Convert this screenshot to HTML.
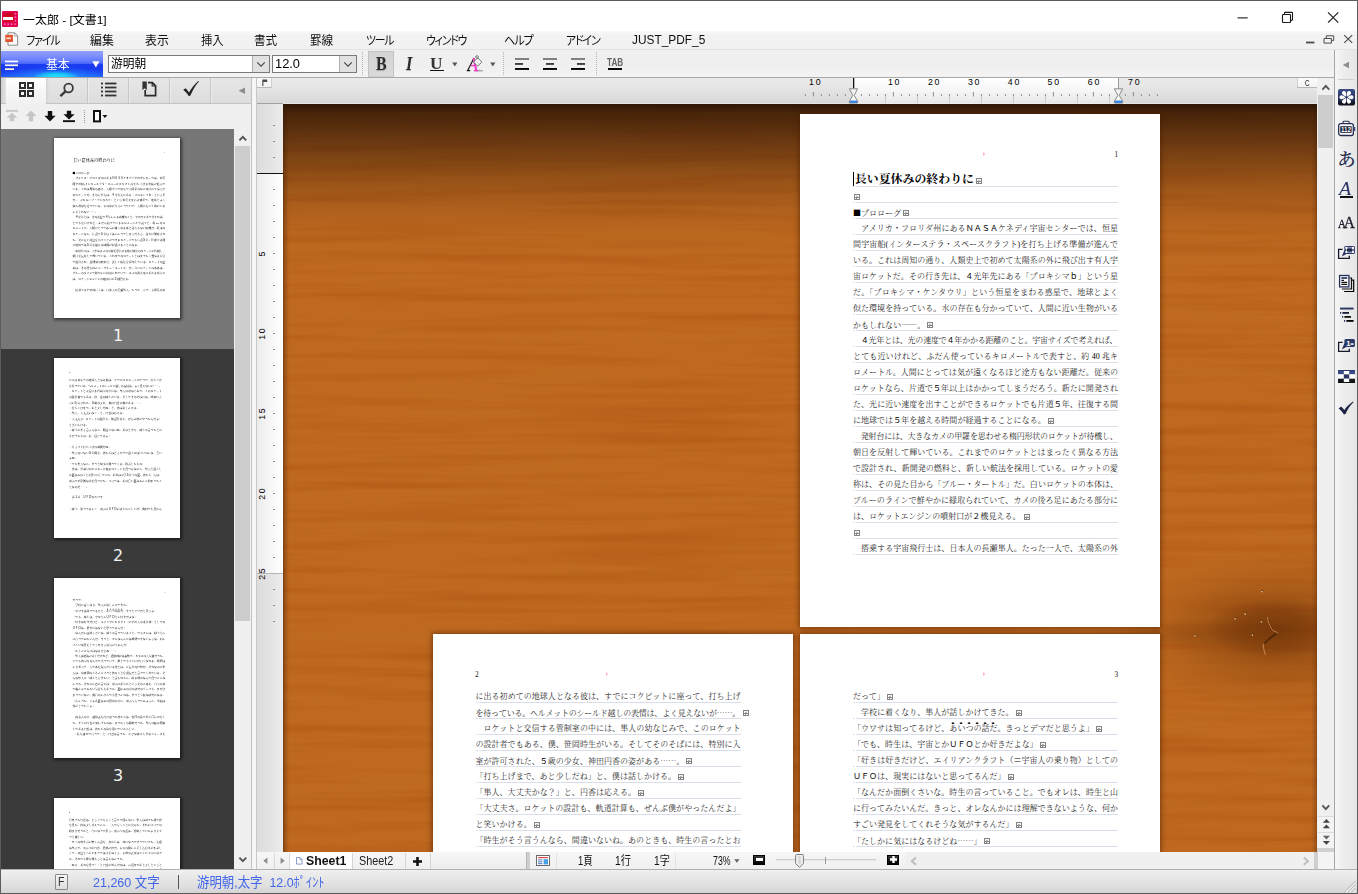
<!DOCTYPE html>
<html lang="ja">
<head>
<meta charset="utf-8">
<title>一太郎 - [文書1]</title>
<style>

*{box-sizing:border-box;margin:0;padding:0}
html,body{width:1358px;height:894px;overflow:hidden;background:#fff}
body{font-family:"Liberation Sans","Noto Sans CJK JP",sans-serif;font-size:12px;color:#000}
#app{position:absolute;left:0;top:0;width:1358px;height:894px;overflow:hidden;background:#fff}
.a{position:absolute}
.t{position:absolute;white-space:pre;line-height:20px;height:20px;transform-origin:0 50%;font-feature-settings:"palt"}
svg{position:absolute;overflow:visible}

.ln{position:absolute;left:0;width:265px;height:16px;line-height:16px;font-size:8px;font-weight:300;white-space:nowrap;letter-spacing:.03px;font-family:"Liberation Serif","Noto Serif CJK SC",serif;color:#000}
.ln.j{text-align:justify;text-align-last:justify;text-justify:inter-character;letter-spacing:0}
.ln.tt{margin-top:-1.6px;padding-left:1.8px;font-size:11.9px;font-weight:700;letter-spacing:.03px;font-family:"Liberation Serif","Noto Serif CJK SC",serif}
.g{font-family:"Liberation Sans","Noto Sans CJK JP",sans-serif;font-weight:400}
.c{font-family:"Noto Serif CJK SC","Liberation Serif",serif}
.em{position:relative}
.em:before{content:"";position:absolute;left:0;right:0;top:-2.2px;height:2.6px;background:radial-gradient(ellipse 1.25px 1.3px at 50% 50%,#000 0,#000 72%,rgba(0,0,0,0) 100%) 0 0/8.03px 2.6px repeat-x}
.thp .ln{font-weight:500}
.pg{position:absolute;background:#fff}
.thp{position:absolute;width:360px;height:514px;transform:scale(.35);transform-origin:0 0;background:#fff}
.thb{position:absolute;width:126px;height:180px;background:#fff;overflow:hidden;box-shadow:1px 1px 3px 1px rgba(0,0,0,.55)}
.tl{position:absolute;left:0;width:234px;text-align:center;font-size:16px;line-height:20px;color:#f2f2f2;font-family:"DejaVu Sans","Liberation Sans",sans-serif}

.page{position:absolute;background:#fff;box-shadow:0 0 5px 1px rgba(70,28,0,.6)}
.ul{position:absolute;height:1px;width:265px;background:linear-gradient(90deg,#dde1ec 0,#dde1ec 1.6px,rgba(255,255,255,0) 1.6px,rgba(255,255,255,0) 3.2px,#dadeeb 3.2px,#dadeeb 100%)}
.rm{position:absolute;width:6px;height:6px;background:#858585}
.rm:before{content:"";position:absolute;left:1px;top:1px;width:4px;height:2px;background:linear-gradient(90deg,#fff 0,#fff 1.2px,#b9b9b9 1.2px,#b9b9b9 2.6px,#fff 2.6px,#fff 100%);border-top:1px solid #f4f4f4;box-sizing:content-box;height:1.2px}
.rm:after{content:"";position:absolute;left:1px;top:4px;width:4px;height:1px;background:linear-gradient(90deg,#fff 0,#fff 1px,#858585 1px,#858585 1.8px,#fff 1.8px,#fff 100%)}

</style>
</head>
<body>
<div id="app">
<div class="a" style="left:0;top:0;width:1358px;height:30px;background:#fff"></div>
<svg style="left:2px;top:10.5px" width="16" height="16" viewBox="0 0 16 16">
<rect x="0" y="0" width="16" height="16" rx="1" fill="#e2064c"/>
<rect x="1.5" y="2" width="10.5" height="8.5" fill="#cf0621"/>
<rect x="1" y="6" width="10" height="3" fill="#fff"/>
<g fill="#ff5fd0"><rect x="12.6" y="2" width="1.6" height="1.6"/><rect x="12.6" y="5.4" width="1.6" height="1.6"/><rect x="12.6" y="8.8" width="1.6" height="1.6"/>
<rect x="2" y="12.4" width="1.6" height="1.6"/><rect x="5.4" y="12.4" width="1.6" height="1.6"/><rect x="8.8" y="12.4" width="1.6" height="1.6"/><rect x="12.4" y="12.4" width="1.6" height="1.6" fill="#f06a9a"/></g>
</svg>
<span class="t " style="left:23.3px;top:9.6px;font-size:11.8px;font-weight:400;color:#000;font-family:'Liberation Sans','Noto Sans CJK JP',sans-serif;transform:scaleX(1.013);">一太郎 - [文書1]</span>
<svg style="left:1230px;top:8px" width="120" height="20" viewBox="1230 8 120 20" fill="none" stroke="#1a1a1a" stroke-width="1">
<path d="M1237.5 17.9h10.2" stroke-width="1.1"/>
<rect x="1282.5" y="14.5" width="8" height="8" rx="0.8" stroke-width="1.1"/>
<path d="M1284.5 14.2v-1a0.800 0.800 0 0 1 0.800 -0.800h6.400a0.800 0.800 0 0 1 0.800 0.800v6.400a0.800 0.800 0 0 1 -0.800 0.800h-1" stroke-width="1.1"/>
<path d="M1328 12.4l10.3 10.3M1338.3 12.4l-10.3 10.3" stroke-width="1.15"/>
</svg>
<div class="a" style="left:1px;top:30.5px;width:1356px;height:19.5px;background:linear-gradient(#f8f8f8,#f2f2f2 25%,#f1f1f1)"></div>
<div class="a" style="left:1px;top:49px;width:1356px;height:1px;background:#e3e3e3"></div>
<svg style="left:5px;top:32px" width="14" height="14" viewBox="0 0 14 14">
<path d="M3 0.8h6.6l3 3v9.4h-9.6z" fill="#fdfdfd" stroke="#8a8a8a" stroke-width="1"/>
<path d="M9.4 0.8v3.2h3.2" fill="none" stroke="#9a9a9a" stroke-width="0.9"/>
<rect x="0.3" y="2.8" width="7.6" height="7.2" fill="#e2512f"/>
<rect x="1.3" y="5.4" width="4.6" height="1.8" fill="#fbd9cf"/>
</svg>
<span class="t " style="left:25.5px;top:30.8px;font-size:12.3px;font-weight:400;color:#111;font-family:'Liberation Sans','Noto Sans CJK JP',sans-serif;transform:scaleX(0.897);letter-spacing:-1.3px;">ファイル</span>
<span class="t " style="left:90.4px;top:30.8px;font-size:12.3px;font-weight:400;color:#111;font-family:'Liberation Sans','Noto Sans CJK JP',sans-serif;transform:scaleX(0.967);">編集</span>
<span class="t " style="left:145.2px;top:30.8px;font-size:12.3px;font-weight:400;color:#111;font-family:'Liberation Sans','Noto Sans CJK JP',sans-serif;transform:scaleX(0.967);">表示</span>
<span class="t " style="left:201.4px;top:30.8px;font-size:12.3px;font-weight:400;color:#111;font-family:'Liberation Sans','Noto Sans CJK JP',sans-serif;transform:scaleX(0.918);">挿入</span>
<span class="t " style="left:253.8px;top:30.8px;font-size:12.3px;font-weight:400;color:#111;font-family:'Liberation Sans','Noto Sans CJK JP',sans-serif;transform:scaleX(0.943);">書式</span>
<span class="t " style="left:310.4px;top:30.8px;font-size:12.3px;font-weight:400;color:#111;font-family:'Liberation Sans','Noto Sans CJK JP',sans-serif;transform:scaleX(0.943);">罫線</span>
<span class="t " style="left:366px;top:30.8px;font-size:12.3px;font-weight:400;color:#111;font-family:'Liberation Sans','Noto Sans CJK JP',sans-serif;transform:scaleX(0.881);letter-spacing:-1.3px;">ツール</span>
<span class="t " style="left:426.4px;top:30.8px;font-size:12.3px;font-weight:400;color:#111;font-family:'Liberation Sans','Noto Sans CJK JP',sans-serif;transform:scaleX(0.877);letter-spacing:-1.3px;">ウィンドウ</span>
<span class="t " style="left:504.2px;top:30.8px;font-size:12.3px;font-weight:400;color:#111;font-family:'Liberation Sans','Noto Sans CJK JP',sans-serif;transform:scaleX(0.912);letter-spacing:-1.3px;">ヘルプ</span>
<span class="t " style="left:565.8px;top:30.8px;font-size:12.3px;font-weight:400;color:#111;font-family:'Liberation Sans','Noto Sans CJK JP',sans-serif;transform:scaleX(0.889);letter-spacing:-1.3px;">アドイン</span>
<span class="t " style="left:632.4px;top:30px;font-size:13.6px;font-weight:400;color:#111;font-family:'Liberation Sans','Noto Sans CJK JP',sans-serif;transform:scaleX(0.874);">JUST_PDF_5</span>
<svg style="left:1300px;top:32px" width="56" height="16" viewBox="1300 32 56 16" fill="none" stroke="#4a4a4a">
<path d="M1306 42.5h8.4" stroke-width="1.8"/>
<path d="M1324 38.5h7.4v4.6h-7.4z" stroke-width="1"/>
<path d="M1326.3 38.3v-2.5h7.4v4.6h-2.2" stroke-width="1"/>
<path d="M1344.2 35.2l8 7.6M1352.2 35.2l-8 7.6" stroke-width="1.1"/>
</svg>
<div class="a" style="left:1px;top:50px;width:1333px;height:27px;background:linear-gradient(#f0f0f0,#efefef 60%,#f4f4f4)"></div>
<div class="a" style="left:1px;top:77px;width:1333px;height:1px;background:#a8a8a8"></div>
<div class="a" style="left:1px;top:51px;width:102px;height:26px;background:
radial-gradient(ellipse 24px 7px at 54% 102%,#1ee4ff 0%,rgba(26,214,255,.95) 45%,rgba(30,170,255,0) 100%),
radial-gradient(ellipse 58px 12px at 54% 106%,rgba(30,190,255,.95) 0%,rgba(32,150,255,.6) 45%,rgba(31,120,255,0) 100%),
linear-gradient(#8d9dff 0%,#8797ff 12%,#7487ff 26%,#5f78fd 40%,#4764fa 49%,#1b3bf1 52%,#1a3af0 70%,#1f48f3 86%,#2358f6 100%)"></div>
<svg style="left:5px;top:58.5px" width="14" height="12" viewBox="0 0 14 12" fill="#fff">
<rect x="0" y="1.6" width="13" height="1.7"/><rect x="0" y="5.4" width="13" height="1.7" fill="#fffbe8"/><rect x="0" y="9.3" width="9" height="1.7" fill="#fff8dc"/></svg>
<span class="t " style="left:46.2px;top:54.6px;font-size:12.3px;font-weight:400;color:#fff;font-family:'Liberation Sans','Noto Sans CJK JP',sans-serif;transform:scaleX(0.959);">基本</span>
<svg style="left:91.5px;top:60.5px" width="8" height="7" viewBox="0 0 8 7"><path d="M0.3 0.3h7.2l-3.6 6.2z" fill="#fff"/></svg>
<div class="a" style="left:108px;top:55px;width:162px;height:18px;background:#fff;border:1px solid #7a7a7a"></div>
<div class="a" style="left:252px;top:56px;width:17px;height:16px;background:#e1e1e1;border-left:1px solid #adadad"></div>
<svg style="left:255.5px;top:61px" width="10" height="7" viewBox="0 0 10 7"><path d="M1.2 1.4l3.8 3.8 3.8-3.8" fill="none" stroke="#444" stroke-width="1.1"/></svg>
<span class="t " style="left:111.2px;top:54.3px;font-size:12.3px;font-weight:400;color:#000;font-family:'Liberation Sans','Noto Sans CJK JP',sans-serif;transform:scaleX(0.954);">游明朝</span>
<div class="a" style="left:272px;top:55px;width:85px;height:18px;background:#fff;border:1px solid #7a7a7a"></div>
<div class="a" style="left:339px;top:56px;width:17px;height:16px;background:#e1e1e1;border-left:1px solid #adadad"></div>
<svg style="left:342.5px;top:61px" width="10" height="7" viewBox="0 0 10 7"><path d="M1.2 1.4l3.8 3.8 3.8-3.8" fill="none" stroke="#444" stroke-width="1.1"/></svg>
<span class="t " style="left:275.2px;top:54.3px;font-size:13px;font-weight:400;color:#000;font-family:'Liberation Sans','Noto Sans CJK JP',sans-serif;transform:scaleX(0.988);">12.0</span>
<div class="a" style="left:362px;top:52px;width:1px;height:24px;background:repeating-linear-gradient(#b4b4b4 0 1px,transparent 1px 2px)"></div>
<div class="a" style="left:503px;top:52px;width:1px;height:24px;background:repeating-linear-gradient(#b4b4b4 0 1px,transparent 1px 2px)"></div>
<div class="a" style="left:596px;top:52px;width:1px;height:24px;background:repeating-linear-gradient(#b4b4b4 0 1px,transparent 1px 2px)"></div>
<div class="a" style="left:368px;top:51px;width:26px;height:26px;background:linear-gradient(#d4d4d4,#dadada);border:1px solid #c2c2c2;border-bottom-color:#cfcfcf"></div>
<span class="t" style="left:375.6px;top:54.1px;font-family:'Liberation Serif',serif;font-weight:700;font-size:19.5px;color:#2c2c2c;text-shadow:0 1px 1px rgba(0,0,0,.25);transform:scaleX(.82)">B</span>
<span class="t" style="left:405.6px;top:54.1px;font-family:'Liberation Serif',serif;font-weight:700;font-style:italic;font-size:19px;color:#2c2c2c;text-shadow:0 1px 1px rgba(0,0,0,.25);transform:scaleX(.85)">I</span>
<span class="t" style="left:430.2px;top:53.7px;font-family:'Liberation Serif',serif;font-weight:700;font-size:15.8px;color:#333;transform:scaleX(1.1)">U</span>
<div class="a" style="left:430px;top:69.6px;width:14px;height:1.6px;background:#111"></div>
<svg style="left:451.8px;top:62px" width="6" height="5" viewBox="0 0 6 5"><path d="M0.2 0.4h5.2l-2.6 4z" fill="#555"/></svg>
<svg style="left:489.6px;top:62px" width="6" height="5" viewBox="0 0 6 5"><path d="M0.2 0.4h5.2l-2.6 4z" fill="#555"/></svg>
<svg style="left:466px;top:55px" width="18" height="18" viewBox="0 0 18 18" fill="none">
<ellipse cx="13" cy="15.700" rx="4.200" ry="0.900" fill="rgba(0,0,0,.28)"/>
<path d="M1.700 15.400L8 3" stroke="#1a1a1a" stroke-width="1.200"/>
<path d="M0.800 15.600h3.400" stroke="#111" stroke-width="1.300"/>
<path d="M7.600 3.200c1 3.800 1.800 7.800 2.600 12" stroke="#f040cc" stroke-width="2.100"/>
<path d="M4.800 10.600h4.800" stroke="#f040cc" stroke-width="1.500"/>
<path d="M7.800 15.600h4.400" stroke="#f040cc" stroke-width="1.500"/>
<path d="M11.700 2.900l4.100 4.100-4.100 4.100-4.100-4.100z" fill="#fff" stroke="#5e5e5e" stroke-width="0.900"/>
<path d="M10.400 6.400l2.400 2.400" stroke="#aaa" stroke-width="0.800"/>
<circle cx="11" cy="2" r="1.300" fill="#fff" stroke="#555" stroke-width="0.800"/>
</svg>
<svg style="left:515px;top:57px" width="14" height="14" viewBox="0 0 14 14">
<rect x="0" y="1.1" width="14" height="1.8" fill="#747474"/><rect x="0" y="6.1" width="8" height="1.7" fill="#2a2a2a"/><rect x="0" y="11" width="14" height="1.9" fill="#000"/></svg>
<svg style="left:543px;top:57px" width="14" height="14" viewBox="0 0 14 14">
<rect x="0" y="1.1" width="14" height="1.8" fill="#747474"/><rect x="3" y="6.1" width="8" height="1.7" fill="#2a2a2a"/><rect x="0" y="11" width="14" height="1.9" fill="#000"/></svg>
<svg style="left:571px;top:57px" width="14" height="14" viewBox="0 0 14 14">
<rect x="0" y="1.1" width="14" height="1.8" fill="#747474"/><rect x="6" y="6.1" width="8" height="1.7" fill="#2a2a2a"/><rect x="0" y="11" width="14" height="1.9" fill="#000"/></svg>
<span class="t " style="left:607px;top:52.4px;font-size:11px;font-weight:700;color:#666;font-family:'Liberation Sans','Noto Sans CJK JP',sans-serif;transform:scaleX(0.743);letter-spacing:0">TAB</span>
<div class="a" style="left:608px;top:68.1px;width:14.2px;height:1.8px;background:#0a0a0a"></div>
<div class="a" style="left:1px;top:78px;width:250px;height:26px;background:linear-gradient(#e6e6e6,#dddddd)"></div>
<div class="a" style="left:1px;top:103px;width:250px;height:1px;background:#c4c4c4"></div>
<div class="a" style="left:1px;top:104px;width:250px;height:25px;background:#f0f0f0"></div>
<div class="a" style="left:1px;top:78px;width:5px;height:25px;background:linear-gradient(90deg,#cfcfcf,#e4e4e4)"></div>
<div class="a" style="left:6px;top:78px;width:40px;height:27px;background:linear-gradient(#ffffff,#f8f8f8 40%,#f0f0f0)"></div>
<div class="a" style="left:87px;top:78px;width:1px;height:25px;background:#c6c6c6"></div>
<div class="a" style="left:88px;top:78px;width:1px;height:25px;background:#ececec"></div>
<div class="a" style="left:128px;top:78px;width:1px;height:25px;background:#c6c6c6"></div>
<div class="a" style="left:129px;top:78px;width:1px;height:25px;background:#ececec"></div>
<div class="a" style="left:169px;top:78px;width:1px;height:25px;background:#c6c6c6"></div>
<div class="a" style="left:170px;top:78px;width:1px;height:25px;background:#ececec"></div>
<div class="a" style="left:210px;top:78px;width:1px;height:25px;background:#c6c6c6"></div>
<div class="a" style="left:211px;top:78px;width:1px;height:25px;background:#ececec"></div>
<div class="a" style="left:46px;top:78px;width:3px;height:25px;background:linear-gradient(90deg,#d2d2d2,rgba(220,220,220,0))"></div>
<svg style="left:19px;top:82px" width="15" height="15" viewBox="0 0 15 15" fill="none" stroke="#2e2e2e" stroke-width="2">
<rect x="1" y="1" width="5" height="5"/><rect x="9" y="1" width="5" height="5"/><rect x="1" y="9" width="5" height="5"/><rect x="9" y="9" width="5" height="5"/></svg>
<svg style="left:59px;top:82px" width="16" height="16" viewBox="0 0 16 16" fill="none" stroke="#3a3a3a">
<circle cx="9.6" cy="6" r="4.3" stroke-width="1.8"/><path d="M6.4 9.4l-5 4.8" stroke-width="2.4"/></svg>
<svg style="left:101px;top:82px" width="16" height="15" viewBox="0 0 16 15" fill="#333">
<rect x="0" y="0.6" width="2" height="1.8"/><rect x="4" y="0.6" width="11.4" height="1.8"/>
<rect x="0" y="4.6" width="2" height="1.8"/><rect x="4" y="4.6" width="11.4" height="1.8"/>
<rect x="0" y="8.6" width="2" height="1.8"/><rect x="4" y="8.6" width="11.4" height="1.8"/>
<rect x="0" y="12.6" width="2" height="1.8"/><rect x="4" y="12.6" width="11.4" height="1.8"/></svg>
<svg style="left:142px;top:81px" width="15" height="16" viewBox="0 0 15 16" fill="none" stroke="#2a2a2a">
<path d="M6 1.6h4.4l3.2 3.2v9.8h-10.4v-5.6" stroke-width="1.7"/>
<path d="M0.4 0.4h4.4v8.6l-2.2-1.8-2.2 1.8z" fill="#333" stroke="none"/>
<path d="M10.2 1.8v3.2h3.2" stroke-width="1.2"/></svg>
<svg style="left:182px;top:80px" width="18" height="18" viewBox="0 0 18 18">
<path d="M1.2 9.8l2.6-1.6 3.2 4.4c2.6-4.6 5.6-8.4 9.4-11.6l0.6 0.5c-3.6 4-6.4 8.6-8.6 14.1l-1.6 0.6c-1.6-2.6-3.2-4.6-5.6-6.4z" fill="#222"/></svg>
<svg style="left:238px;top:87px" width="8" height="8" viewBox="0 0 8 8"><path d="M7 0.6v6.4l-6.4-3.2z" fill="#8c8c8c"/></svg>
<svg style="left:5px;top:109px" width="110" height="15" viewBox="5 109 110 15">
<g fill="#c6c6c6"><rect x="6" y="110" width="12" height="1.8"/><path d="M12 112.8l5.4 5h-3.2v3.4h-4.4v-3.4h-3.2z"/>
<path d="M31 110.6l5.4 5.4h-3.2v5.2h-4.4v-5.2h-3.2z"/></g>
<g fill="#111"><path d="M50 121.4l-5.6-5.6h3.4v-4.8h4.4v4.8h3.4z"/>
<path d="M69 119.4l-5.6-5.2h3.4v-3.4h4.4v3.4h3.4z"/><rect x="63" y="120.2" width="12" height="1.9"/>
<path d="M102.4 115h5l-2.5 3z"/></g>
<rect x="94" y="111" width="6" height="10.4" fill="#fff" stroke="#111" stroke-width="2"/>
</svg>
<div class="a" style="left:84px;top:110px;width:1px;height:14px;background:repeating-linear-gradient(#9a9a9a 0 1px,transparent 1px 2px)"></div>
<div class="a" style="left:1px;top:129px;width:233px;height:740px;background:#3a3a3a;overflow:hidden">
<div class="a" style="left:0;top:0;width:233px;height:220px;background:#777"></div>
<div class="thb" style="left:53px;top:9px"><div class="thp">
<div class="a" style="left:53.3px;top:34.6px;width:265px;text-align:right;font:7.4px/12px 'Liberation Serif',serif;color:#222">1</div>
<div style="left:53px;top:59px" class="ln tt ">長い夏休みの終わりに</div>
<div style="left:53px;top:91px" class="ln "><span class="c">■</span>プロローグ</div>
<div style="left:53px;top:107px" class="ln j ">　アメリカ・フロリダ州にある<span class="g">ＮＡＳＡ</span>ケネディ宇宙センターでは、恒星</div>
<div style="left:53px;top:123px" class="ln j ">間宇宙船(インターステラ・スペースクラフト)を打ち上げる準備が進んで</div>
<div style="left:53px;top:139px" class="ln j ">いる。これは周知の通り、人類史上で初めて太陽系の外に飛び出す有人宇</div>
<div style="left:53px;top:155px" class="ln j ">宙ロケットだ。その行き先は、<span class="g">４</span>光年先にある「プロキシマ<span class="g">ｂ</span>」という星</div>
<div style="left:53px;top:171px" class="ln j ">だ。「プロキシマ・ケンタウリ」という恒星をまわる惑星で、地球とよく</div>
<div style="left:53px;top:187px" class="ln j ">似た環境を持っている。水の存在も分かっていて、人間に近い生物がいる</div>
<div style="left:53px;top:203px" class="ln ">かもしれない<span class="c">――</span>。</div>
<div class="ln " style="left:53px;top:219px;letter-spacing:-0.206px">　<span class="g">４</span>光年とは、光の速度で<span class="g">４</span>年かかる距離のこと。宇宙サイズで考えれば、</div>
<div style="left:53px;top:235px" class="ln j ">とても近いけれど、ふだん使っているキロメートルで表すと、約 40 兆キ</div>
<div style="left:53px;top:251px" class="ln j ">ロメートル。人間にとっては気が遠くなるほど途方もない距離だ。従来の</div>
<div style="left:53px;top:267px" class="ln j ">ロケットなら、片道で<span class="g">５</span>年以上はかかってしまうだろう。新たに開発され</div>
<div style="left:53px;top:283px" class="ln j ">た、光に近い速度を出すことができるロケットでも片道<span class="g">５</span>年、往復する間</div>
<div style="left:53px;top:299px" class="ln ">に地球では<span class="g">５</span>年を越える時間が経過することになる。</div>
<div class="ln " style="left:53px;top:315px;letter-spacing:-0.206px">　発射台には、大きなカメの甲羅を思わせる楕円形状のロケットが待機し、</div>
<div style="left:53px;top:331px" class="ln j ">朝日を反射して輝いている。これまでのロケットとはまったく異なる方法</div>
<div style="left:53px;top:347px" class="ln j ">で設計され、新開発の燃料と、新しい航法を採用している。ロケットの愛</div>
<div style="left:53px;top:363px" class="ln j ">称は、その見た目から「ブルー・タートル」だ。白いロケットの本体は、</div>
<div style="left:53px;top:379px" class="ln j ">ブルーのラインで鮮やかに縁取られていて、カメの後ろ足にあたる部分に</div>
<div style="left:53px;top:395px" class="ln ">は、ロケットエンジンの噴射口が<span class="g">２</span>機見える。</div>
<div style="left:53px;top:427px" class="ln j ">　搭乗する宇宙飛行士は、日本人の長瀬隼人。たった一人で、太陽系の外</div>
</div></div>
<div class="tl" style="top:196.6px">1</div>
<div class="thb" style="left:53px;top:229px"><div class="thp">
<div class="a" style="left:42.6px;top:34.6px;width:265px;text-align:left;font:7.4px/12px 'Liberation Serif',serif;color:#222">2</div>
<div style="left:43px;top:55px" class="ln j ">に出る初めての地球人となる彼は、すでにコクピットに座って、打ち上げ</div>
<div class="ln " style="left:43px;top:71px;letter-spacing:-0.206px">を待っている。ヘルメットのシールド越しの表情は、よく見えないが<span class="c">……</span>。</div>
<div style="left:43px;top:87px" class="ln j ">　ロケットと交信する管制室の中には、隼人の幼なじみで、このロケット</div>
<div style="left:43px;top:103px" class="ln j ">の設計者でもある、僕、笹岡時生がいる。そしてそのそばには、特別に入</div>
<div style="left:43px;top:119px" class="ln ">室が許可された、<span class="g">５</span>歳の少女、神田円香の姿がある<span class="c">……</span>。</div>
<div style="left:43px;top:135px" class="ln ">「打ち上げまで、あと少しだね」と、僕は話しかける。</div>
<div style="left:43px;top:151px" class="ln ">「隼人、大丈夫かな？」と、円香は応える。</div>
<div style="left:43px;top:167px" class="ln j ">「大丈夫さ。ロケットの設計も、軌道計算も、ぜんぶ僕がやったんだよ」</div>
<div style="left:43px;top:183px" class="ln ">と笑いかける。</div>
<div style="left:43px;top:199px" class="ln j ">「時生がそう言うんなら、間違いないね。あのときも、時生の言ったとお</div>
<div style="left:43px;top:215px" class="ln ">りだったもの。私、信じてるよ」</div>
<div style="left:43px;top:247px" class="ln ">「もうすぐ打ち上げの時間だね」</div>
<div style="left:43px;top:263px" class="ln j ">「隼人のいない<span class="g">５</span>年間を、僕たちはどうやって過ごせばいいのかな。長い</div>
<div style="left:43px;top:279px" class="ln ">よね」</div>
<div style="left:43px;top:295px" class="ln ">「でも隼人なら、きっと無事に帰ってくる。約束したもの」</div>
<div style="left:43px;top:311px" class="ln j ">　僕は、管制室のモニターに映るロケットを見つめながら、隼人と過ごし</div>
<div class="ln " style="left:43px;top:327px;letter-spacing:-0.206px">た夏休みのことを思い出していた。あれは小学<span class="g">５</span>年生の夏。僕たち三人は、</div>
<div style="left:43px;top:343px" class="ln j ">裏山で不思議な光を見つけた。すべては、あの長い夏休みから始まったこ</div>
<div style="left:43px;top:359px" class="ln ">となのだ<span class="c">……</span>。</div>
<div style="left:43px;top:391px" class="ln ">　第<span class="g">１</span>章　<span class="g">ＵＦＯ</span>のウワサ</div>
<div style="left:43px;top:423px" class="ln j ">「時生、知ってるか？　裏山に<span class="g">ＵＦＯ</span>が落ちたらしいぞ。隣町でも見たん</div>
</div></div>
<div class="tl" style="top:416.6px">2</div>
<div class="thb" style="left:53px;top:449px"><div class="thp">
<div class="a" style="left:53.3px;top:34.6px;width:265px;text-align:right;font:7.4px/12px 'Liberation Serif',serif;color:#222">3</div>
<div style="left:53px;top:55px" class="ln ">だって」</div>
<div style="left:53px;top:71px" class="ln ">　学校に着くなり、隼人が話しかけてきた。</div>
<div style="left:53px;top:87px" class="ln ">「ウワサは知ってるけど、<span class="em">あいつの話だ</span>。きっとデマだと思うよ」</div>
<div style="left:53px;top:103px" class="ln ">「でも、時生は、宇宙とか<span class="g">ＵＦＯ</span>とか好きだよな」</div>
<div style="left:53px;top:119px" class="ln j ">「好きは好きだけど、エイリアンクラフト（<span class="g">＝</span>宇宙人の乗り物）としての</div>
<div style="left:53px;top:135px" class="ln "><span class="g">ＵＦＯ</span>は、現実にはないと思ってるんだ」</div>
<div style="left:53px;top:151px" class="ln j ">「なんだか面倒くさいな。時生の言っていること。でもオレは、時生と山</div>
<div style="left:53px;top:167px" class="ln j ">に行ってみたいんだ。きっと、オレなんかには理解できないような、何か</div>
<div style="left:53px;top:183px" class="ln ">すごい発見をしてくれそうな気がするんだ」</div>
<div style="left:53px;top:199px" class="ln ">「たしかに気にはなるけどね<span class="c">……</span>」</div>
<div class="ln " style="left:53px;top:215px;letter-spacing:-0.206px">　隼人は勉強が苦手だけれど、運動神経は抜群で、クラスの人気者だった。</div>
<div style="left:53px;top:231px" class="ln j ">いつも教室の真ん中で笑っていて、誰とでもすぐに仲良くなれる。理屈ば</div>
<div style="left:53px;top:247px" class="ln j ">かり並べて一人で本を読んでいる僕とは、正反対の性格だ。それなのに隼</div>
<div style="left:53px;top:263px" class="ln j ">人は、幼稚園のころからずっと僕のことを親友だと言ってくれている。そ</div>
<div style="left:53px;top:279px" class="ln j ">んな隼人に「時生と行きたい」と言われたら、断る理由なんて見つからな</div>
<div style="left:53px;top:295px" class="ln j ">かった。それに正直に言えば、裏山に落ちたという光の正体を、自分の目</div>
<div style="left:53px;top:311px" class="ln j ">で確かめてみたい気持ちもあった。夏休みの自由研究のテーマも、まだ決</div>
<div style="left:53px;top:327px" class="ln j ">まっていない。隕石のかけらでも見つかれば、きっと立派な研究になる。</div>
<div style="left:53px;top:343px" class="ln j ">「わかった。じゃあ夏休みの最初の日に、裏山へ行ってみようか。準備は</div>
<div style="left:53px;top:359px" class="ln ">僕がしておくよ」</div>
<div style="left:53px;top:391px" class="ln j ">　終業式の日、通知表を受け取った僕たちは、校門の前で待ち合わせをし</div>
<div style="left:53px;top:407px" class="ln j ">た。そこに円香が加わったのは、まったくの偶然だった。隼人の妹の同級</div>
<div style="left:53px;top:423px" class="ln ">生である円香は、僕たちの話を聞いていたらしい。</div>
<div style="left:53px;top:439px" class="ln j ">　「私も連れて行って」と、円香は言った。小さな体に大きなリュックを</div>
</div></div>
<div class="tl" style="top:636.6px">3</div>
<div class="thb" style="left:53px;top:669px"><div class="thp">
<div class="a" style="left:42.6px;top:34.6px;width:265px;text-align:left;font:7.4px/12px 'Liberation Serif',serif;color:#222">4</div>
<div style="left:43px;top:55px" class="ln j ">背負った円香は、どうしても行くと言って聞かない。隼人は困った顔で僕</div>
<div style="left:43px;top:71px" class="ln j ">を見た。僕は少し考えてから、三人で行くことに決めた。それがすべての</div>
<div style="left:43px;top:87px" class="ln j ">始まりだったと、今になって思う。裏山への道は、想像していたよりもず</div>
<div style="left:43px;top:103px" class="ln ">っと険しい。</div>
<div style="left:43px;top:119px" class="ln j ">　セミの鳴き声が響く山道を、僕たちは一列になって登っていった。先頭</div>
<div style="left:43px;top:135px" class="ln j ">は隼人で、真ん中が円香、最後が僕だ。木々の間から差し込む光がまぶし</div>
<div style="left:43px;top:151px" class="ln j ">くて、何度も立ち止まっては汗をぬぐう。水筒の麦茶はすぐに半分になっ</div>
<div style="left:43px;top:167px" class="ln ">た。それでも誰も帰ろうとは言わなかった。</div>
<div style="left:43px;top:183px" class="ln j ">「ねえ、あれを見て！」と円香が叫んだのは、山頂まであと少しというと</div>
<div style="left:43px;top:199px" class="ln j ">ころだった。指さす先の林の奥で、何かが青白く光っている。僕たちは顔</div>
</div></div>
</div>
<div class="a" style="left:234px;top:129px;width:17px;height:740px;background:#f0f0f0"></div>
<div class="a" style="left:235px;top:146px;width:15px;height:475px;background:#cdcdcd"></div>
<svg style="left:238px;top:134px" width="10" height="8" viewBox="0 0 10 8"><path d="M1.4 6.4l3.4-3.6 3.4 3.6" fill="none" stroke="#555" stroke-width="1.9"/></svg>
<svg style="left:238px;top:856px" width="10" height="8" viewBox="0 0 10 8"><path d="M1.4 1.6l3.4 3.6 3.4-3.6" fill="none" stroke="#555" stroke-width="1.9"/></svg>
<div class="a" style="left:251px;top:78px;width:6px;height:791px;background:#f6f6f6;border-left:1px solid #c2c2c2;border-right:1px solid #c8c8c8"></div>
<div class="a" style="left:257px;top:78px;width:1061px;height:26px;background:linear-gradient(#ebebeb,#e4e4e4 45%,#dcdcdc 80%,#d8d8d8)"></div>
<div class="a" style="left:853px;top:78px;width:265px;height:26px;background:linear-gradient(#ffffff,#f7f7f7 45%,#ededed 80%,#e4e4e4)"></div>
<div class="a" style="left:257px;top:103px;width:1061px;height:1px;background:rgba(255,255,255,.35)"></div>
<div class="a" style="left:257px;top:103px;width:26px;height:1px;background:#a2a2a2"></div>
<div class="a" style="left:257px;top:78px;width:15px;height:10px;background:linear-gradient(#fafafa,#f2f2f2);border-right:1px solid #d2d2d2;border-bottom:1px solid #b9b9b9"></div>
<svg style="left:262px;top:79px" width="6" height="8" viewBox="0 0 6 8"><path d="M0.3 0.4h4.9v2.7h-3.8v3.9h-1.1z" fill="#4a4a4a"/></svg>
<div class="a" style="left:1297px;top:78px;width:21px;height:10px;background:linear-gradient(#fcfcfc,#f3f3f3);border-left:1px solid #d0d0d0;border-bottom:1px solid #b9b9b9"></div>
<span class="t " style="left:1305.2px;top:72.8px;font-size:8.6px;font-weight:400;color:#222;font-family:'Liberation Sans','Noto Sans CJK JP',sans-serif;transform:scaleX(0.740);">C</span>
<svg style="left:0;top:0" width="1358" height="110" viewBox="0 0 1358 110"><rect x="804.9" y="94" width="1" height="2" fill="#8f8f8f"/><rect x="812.9" y="92" width="1" height="4.4" fill="#8a8a8a"/><rect x="820.9" y="94" width="1" height="2" fill="#8f8f8f"/><rect x="828.9" y="94" width="1" height="2" fill="#8f8f8f"/><rect x="836.9" y="94" width="1" height="2" fill="#8f8f8f"/><rect x="844.9" y="94" width="1" height="2" fill="#8f8f8f"/><rect x="860.9" y="94" width="1" height="2" fill="#8f8f8f"/><rect x="868.9" y="94" width="1" height="2" fill="#8f8f8f"/><rect x="876.9" y="94" width="1" height="2" fill="#8f8f8f"/><rect x="884.9" y="94" width="1" height="9.4" fill="#c9c9c9"/><rect x="884.9" y="94" width="1" height="2" fill="#8f8f8f"/><rect x="892.9" y="92" width="1" height="4.4" fill="#8a8a8a"/><rect x="900.9" y="94" width="1" height="2" fill="#8f8f8f"/><rect x="908.9" y="94" width="1" height="2" fill="#8f8f8f"/><rect x="916.9" y="94" width="1" height="9.4" fill="#c9c9c9"/><rect x="916.9" y="94" width="1" height="2" fill="#8f8f8f"/><rect x="924.9" y="94" width="1" height="2" fill="#8f8f8f"/><rect x="932.9" y="92" width="1" height="4.4" fill="#8a8a8a"/><rect x="940.9" y="94" width="1" height="2" fill="#8f8f8f"/><rect x="948.9" y="94" width="1" height="9.4" fill="#c9c9c9"/><rect x="948.9" y="94" width="1" height="2" fill="#8f8f8f"/><rect x="956.9" y="94" width="1" height="2" fill="#8f8f8f"/><rect x="964.9" y="94" width="1" height="2" fill="#8f8f8f"/><rect x="972.9" y="92" width="1" height="4.4" fill="#8a8a8a"/><rect x="980.9" y="94" width="1" height="9.4" fill="#c9c9c9"/><rect x="980.9" y="94" width="1" height="2" fill="#8f8f8f"/><rect x="988.9" y="94" width="1" height="2" fill="#8f8f8f"/><rect x="996.9" y="94" width="1" height="2" fill="#8f8f8f"/><rect x="1004.9" y="94" width="1" height="2" fill="#8f8f8f"/><rect x="1012.9" y="94" width="1" height="9.4" fill="#c9c9c9"/><rect x="1012.9" y="94" width="1" height="2" fill="#8f8f8f"/><rect x="1020.9" y="94" width="1" height="2" fill="#8f8f8f"/><rect x="1028.9" y="94" width="1" height="2" fill="#8f8f8f"/><rect x="1036.9" y="94" width="1" height="2" fill="#8f8f8f"/><rect x="1044.9" y="94" width="1" height="9.4" fill="#c9c9c9"/><rect x="1044.9" y="94" width="1" height="2" fill="#8f8f8f"/><rect x="1052.9" y="92" width="1" height="4.4" fill="#8a8a8a"/><rect x="1060.9" y="94" width="1" height="2" fill="#8f8f8f"/><rect x="1068.9" y="94" width="1" height="2" fill="#8f8f8f"/><rect x="1076.9" y="94" width="1" height="9.4" fill="#c9c9c9"/><rect x="1076.9" y="94" width="1" height="2" fill="#8f8f8f"/><rect x="1084.9" y="94" width="1" height="2" fill="#8f8f8f"/><rect x="1092.9" y="92" width="1" height="4.4" fill="#8a8a8a"/><rect x="1100.9" y="94" width="1" height="2" fill="#8f8f8f"/><rect x="1108.9" y="94" width="1" height="9.4" fill="#c9c9c9"/><rect x="1108.9" y="94" width="1" height="2" fill="#8f8f8f"/><rect x="1124.9" y="94" width="1" height="2" fill="#8f8f8f"/><rect x="1132.9" y="92" width="1" height="4.4" fill="#8a8a8a"/><rect x="1140.9" y="94" width="1" height="2" fill="#8f8f8f"/><rect x="1148.9" y="94" width="1" height="2" fill="#8f8f8f"/><rect x="1156.9" y="94" width="1" height="2" fill="#8f8f8f"/><rect x="853" y="78" width="1.3" height="10.4" fill="#111"/><rect x="1118" y="78" width="1" height="10.4" fill="#9a9a9a"/><g transform="translate(849 88.4)"><path d="M0.4 0.4h8.2l-3.4 6.6 3.4 5.6v2h-8.2v-2l3.4-5.6z" fill="#f4f4f4" stroke="#7e7e7e" stroke-width="0.9"/><rect x="0.9" y="12.2" width="7.2" height="2.3" fill="#2f86e6"/></g><g transform="translate(1114 88.4)"><path d="M0.4 0.4h8.2l-3.4 6.6 3.4 5.6v2h-8.2v-2l3.4-5.6z" fill="#f4f4f4" stroke="#7e7e7e" stroke-width="0.9"/><rect x="0.9" y="12.2" width="7.2" height="2.3" fill="#2f86e6"/></g></svg>
<span class="t" style="left:804.8px;top:72.2px;width:20px;text-align:center;font:8.8px/20px 'Liberation Sans',sans-serif;letter-spacing:1.8px;text-indent:1.8px;color:#000">10</span>
<span class="t" style="left:883.7px;top:72.2px;width:20px;text-align:center;font:8.8px/20px 'Liberation Sans',sans-serif;letter-spacing:1.8px;text-indent:1.8px;color:#000">10</span>
<span class="t" style="left:923.7px;top:72.2px;width:20px;text-align:center;font:8.8px/20px 'Liberation Sans',sans-serif;letter-spacing:1.8px;text-indent:1.8px;color:#000">20</span>
<span class="t" style="left:963.7px;top:72.2px;width:20px;text-align:center;font:8.8px/20px 'Liberation Sans',sans-serif;letter-spacing:1.8px;text-indent:1.8px;color:#000">30</span>
<span class="t" style="left:1003.6px;top:72.2px;width:20px;text-align:center;font:8.8px/20px 'Liberation Sans',sans-serif;letter-spacing:1.8px;text-indent:1.8px;color:#000">40</span>
<span class="t" style="left:1043.4px;top:72.2px;width:20px;text-align:center;font:8.8px/20px 'Liberation Sans',sans-serif;letter-spacing:1.8px;text-indent:1.8px;color:#000">50</span>
<span class="t" style="left:1083.6px;top:72.2px;width:20px;text-align:center;font:8.8px/20px 'Liberation Sans',sans-serif;letter-spacing:1.8px;text-indent:1.8px;color:#000">60</span>
<span class="t" style="left:1123.8px;top:72.2px;width:20px;text-align:center;font:8.8px/20px 'Liberation Sans',sans-serif;letter-spacing:1.8px;text-indent:1.8px;color:#000">70</span>
<div class="a" style="left:257px;top:104px;width:26px;height:748px;background:linear-gradient(90deg,#dcdcdc,#e3e3e3 50%,#ececec)"></div>
<div class="a" style="left:257px;top:174px;width:26px;height:399px;background:linear-gradient(90deg,#ececec,#f6f6f6 50%,#ffffff)"></div>
<div class="a" style="left:257px;top:172.6px;width:26px;height:1.6px;background:#111"></div>
<div class="a" style="left:257px;top:573px;width:26px;height:1px;background:#b5b5b5"></div>
<svg style="left:0;top:0" width="300" height="870" viewBox="0 0 300 870"><rect x="273" y="125.0" width="2" height="1" fill="#8a8a8a"/><rect x="273" y="141.0" width="2" height="1" fill="#8a8a8a"/><rect x="273" y="157.0" width="2" height="1" fill="#8a8a8a"/><rect x="273" y="189.0" width="2" height="1" fill="#8a8a8a"/><rect x="273" y="205.0" width="2" height="1" fill="#8a8a8a"/><rect x="273" y="221.0" width="2" height="1" fill="#8a8a8a"/><rect x="273" y="237.0" width="2" height="1" fill="#8a8a8a"/><rect x="273" y="253.0" width="2" height="1" fill="#8a8a8a"/><rect x="273" y="269.0" width="2" height="1" fill="#8a8a8a"/><rect x="273" y="285.0" width="2" height="1" fill="#8a8a8a"/><rect x="273" y="301.0" width="2" height="1" fill="#8a8a8a"/><rect x="273" y="317.0" width="2" height="1" fill="#8a8a8a"/><rect x="273" y="333.0" width="2" height="1" fill="#8a8a8a"/><rect x="273" y="349.0" width="2" height="1" fill="#8a8a8a"/><rect x="273" y="365.0" width="2" height="1" fill="#8a8a8a"/><rect x="273" y="381.0" width="2" height="1" fill="#8a8a8a"/><rect x="273" y="397.0" width="2" height="1" fill="#8a8a8a"/><rect x="273" y="413.0" width="2" height="1" fill="#8a8a8a"/><rect x="273" y="429.0" width="2" height="1" fill="#8a8a8a"/><rect x="273" y="445.0" width="2" height="1" fill="#8a8a8a"/><rect x="273" y="461.0" width="2" height="1" fill="#8a8a8a"/><rect x="273" y="477.0" width="2" height="1" fill="#8a8a8a"/><rect x="273" y="493.0" width="2" height="1" fill="#8a8a8a"/><rect x="273" y="509.0" width="2" height="1" fill="#8a8a8a"/><rect x="273" y="525.0" width="2" height="1" fill="#8a8a8a"/><rect x="273" y="541.0" width="2" height="1" fill="#8a8a8a"/><rect x="273" y="557.0" width="2" height="1" fill="#8a8a8a"/><rect x="273" y="589.0" width="2" height="1" fill="#8a8a8a"/><rect x="273" y="605.0" width="2" height="1" fill="#8a8a8a"/><rect x="273" y="621.0" width="2" height="1" fill="#8a8a8a"/></svg>
<span class="t" style="left:247px;top:247.5px;width:30px;height:12px;line-height:12px;text-align:center;font-size:8.8px;font-family:'Liberation Sans',sans-serif;letter-spacing:1.5px;text-indent:1.5px;color:#000;transform:rotate(-90deg);transform-origin:50% 50%">5</span>
<span class="t" style="left:247px;top:327.5px;width:30px;height:12px;line-height:12px;text-align:center;font-size:8.8px;font-family:'Liberation Sans',sans-serif;letter-spacing:1.5px;text-indent:1.5px;color:#000;transform:rotate(-90deg);transform-origin:50% 50%">10</span>
<span class="t" style="left:247px;top:407.5px;width:30px;height:12px;line-height:12px;text-align:center;font-size:8.8px;font-family:'Liberation Sans',sans-serif;letter-spacing:1.5px;text-indent:1.5px;color:#000;transform:rotate(-90deg);transform-origin:50% 50%">15</span>
<span class="t" style="left:247px;top:487.5px;width:30px;height:12px;line-height:12px;text-align:center;font-size:8.8px;font-family:'Liberation Sans',sans-serif;letter-spacing:1.5px;text-indent:1.5px;color:#000;transform:rotate(-90deg);transform-origin:50% 50%">20</span>
<span class="t" style="left:247px;top:567.5px;width:30px;height:12px;line-height:12px;text-align:center;font-size:8.8px;font-family:'Liberation Sans',sans-serif;letter-spacing:1.5px;text-indent:1.5px;color:#000;transform:rotate(-90deg);transform-origin:50% 50%">25</span>
<div class="a" id="doc" style="left:283px;top:104px;width:1034px;height:748px;overflow:hidden;background:#be691f">
<svg style="left:0;top:0" width="1034" height="748"><defs>
<filter id="grain" x="0" y="0" width="100%" height="100%" color-interpolation-filters="sRGB"><feTurbulence type="fractalNoise" baseFrequency="0.004 0.1" numOctaves="3" seed="11" result="n"/>
<feColorMatrix in="n" type="matrix" values="0 0 0 0 0.64  0 0 0 0 0.26  0 0 0 0 0.04  3 0 0 0 -1.35"/></filter>
<filter id="grain2" x="0" y="0" width="100%" height="100%" color-interpolation-filters="sRGB"><feTurbulence type="fractalNoise" baseFrequency="0.003 0.05" numOctaves="2" seed="29" result="n"/>
<feColorMatrix in="n" type="matrix" values="0 0 0 0 0.80  0 0 0 0 0.50  0 0 0 0 0.20  0 3 0 0 -1.4"/></filter></defs>
<rect width="1034" height="748" filter="url(#grain)" opacity="0.24"/>
<rect width="1034" height="748" filter="url(#grain2)" opacity="0.08"/></svg>
<div class="a" style="left:0;top:0;width:1034px;height:748px;background:
radial-gradient(ellipse 70px 30px at 992px 524px,rgba(96,42,6,.4) 0%,rgba(105,48,6,.3) 50%,rgba(120,60,10,0) 100%),
radial-gradient(ellipse 155px 80px at 994px 527px,rgba(105,48,6,.6) 0%,rgba(110,50,8,.54) 22%,rgba(120,58,10,.36) 45%,rgba(130,64,12,.15) 72%,rgba(140,70,14,0) 100%),
radial-gradient(ellipse 110px 14px at 920px 530px,rgba(110,52,8,.3) 0%,rgba(120,58,10,.18) 50%,rgba(140,70,14,0) 100%),
linear-gradient(180deg,rgba(46,22,6,1) 0,rgba(46,22,6,.814) 9px,rgba(46,22,6,.686) 25px,rgba(46,22,6,.543) 42px,rgba(46,22,6,.407) 59px,rgba(46,22,6,.279) 75px,rgba(46,22,6,.171) 92px,rgba(46,22,6,.093) 109px,rgba(46,22,6,.036) 126px,rgba(46,22,6,.007) 146px,rgba(46,22,6,0) 170px),
linear-gradient(90deg,rgba(70,30,5,.55) 0,rgba(80,36,8,.3) 2px,rgba(100,50,10,0) 6px),
linear-gradient(270deg,rgba(70,30,5,.4) 0,rgba(80,36,8,.2) 2px,rgba(100,50,10,0) 6px)"></div>
<svg style="left:955px;top:500px" width="60" height="60" viewBox="0 0 60 60" fill="none">
<path d="M29.600 13c0.600 4.500 2 9.500 5.400 13.600c1.600 0.800 3.200 1.400 4.700 2.200c-5.500 3.400-11.500 7.800-14.700 12.200c0.600 3.600 1.400 6.800 2.400 10" stroke="#d6a160" stroke-width="0.9" opacity=".8"/>
<path d="M39 29.200c-4.500 2.600-9 6-12.600 10.400" stroke="#3f1c04" stroke-width="1.700" opacity=".85"/>
<path d="M30.600 14c0.600 4 1.800 8 4.600 11.800" stroke="#5a2a08" stroke-width="0.8" opacity=".6"/>
<g fill="#4a2206"><circle cx="24.300" cy="-13.100" r=".9"/><circle cx="7.500" cy="9.200" r=".9"/><circle cx="-2.500" cy="14.100" r=".9"/><circle cx="23.700" cy="17.100" r=".9"/><circle cx="14.700" cy="30.400" r=".9"/><circle cx="-42.700" cy="31.100" r=".9"/></g>
<g fill="#ecd3a4"><circle cx="24" cy="-12.400" r=".8"/><circle cx="7.200" cy="9.900" r=".8"/><circle cx="-2.800" cy="14.800" r=".8"/><circle cx="23.400" cy="17.800" r=".8"/><circle cx="14.400" cy="31.100" r=".8"/><circle cx="-43" cy="31.800" r=".8"/></g>
</svg>

<div class="page" style="left:517px;top:10px;width:360px;height:513px;overflow:hidden">
<svg style="left:183.2px;top:38px" width="3" height="4" viewBox="0 0 3 4"><path d="M0.2 0l1.8 2-1.8 2z" fill="#ffa4b0"/></svg>
<div class="a" style="left:53.3px;top:34.6px;width:265px;text-align:right;font:7.4px/12px 'Liberation Serif',serif;color:#222">1</div>
<div style="left:53px;top:59px" class="ln tt ">長い夏休みの終わりに</div>
<div style="left:53px;top:91px" class="ln "><span class="c">■</span>プロローグ</div>
<div style="left:53px;top:107px" class="ln j ">　アメリカ・フロリダ州にある<span class="g">ＮＡＳＡ</span>ケネディ宇宙センターでは、恒星</div>
<div style="left:53px;top:123px" class="ln j ">間宇宙船(インターステラ・スペースクラフト)を打ち上げる準備が進んで</div>
<div style="left:53px;top:139px" class="ln j ">いる。これは周知の通り、人類史上で初めて太陽系の外に飛び出す有人宇</div>
<div style="left:53px;top:155px" class="ln j ">宙ロケットだ。その行き先は、<span class="g">４</span>光年先にある「プロキシマ<span class="g">ｂ</span>」という星</div>
<div style="left:53px;top:171px" class="ln j ">だ。「プロキシマ・ケンタウリ」という恒星をまわる惑星で、地球とよく</div>
<div style="left:53px;top:187px" class="ln j ">似た環境を持っている。水の存在も分かっていて、人間に近い生物がいる</div>
<div style="left:53px;top:203px" class="ln ">かもしれない<span class="c">――</span>。</div>
<div class="ln " style="left:53px;top:219px;letter-spacing:-0.206px">　<span class="g">４</span>光年とは、光の速度で<span class="g">４</span>年かかる距離のこと。宇宙サイズで考えれば、</div>
<div style="left:53px;top:235px" class="ln j ">とても近いけれど、ふだん使っているキロメートルで表すと、約 40 兆キ</div>
<div style="left:53px;top:251px" class="ln j ">ロメートル。人間にとっては気が遠くなるほど途方もない距離だ。従来の</div>
<div style="left:53px;top:267px" class="ln j ">ロケットなら、片道で<span class="g">５</span>年以上はかかってしまうだろう。新たに開発され</div>
<div style="left:53px;top:283px" class="ln j ">た、光に近い速度を出すことができるロケットでも片道<span class="g">５</span>年、往復する間</div>
<div style="left:53px;top:299px" class="ln ">に地球では<span class="g">５</span>年を越える時間が経過することになる。</div>
<div class="ln " style="left:53px;top:315px;letter-spacing:-0.206px">　発射台には、大きなカメの甲羅を思わせる楕円形状のロケットが待機し、</div>
<div style="left:53px;top:331px" class="ln j ">朝日を反射して輝いている。これまでのロケットとはまったく異なる方法</div>
<div style="left:53px;top:347px" class="ln j ">で設計され、新開発の燃料と、新しい航法を採用している。ロケットの愛</div>
<div style="left:53px;top:363px" class="ln j ">称は、その見た目から「ブルー・タートル」だ。白いロケットの本体は、</div>
<div style="left:53px;top:379px" class="ln j ">ブルーのラインで鮮やかに縁取られていて、カメの後ろ足にあたる部分に</div>
<div style="left:53px;top:395px" class="ln ">は、ロケットエンジンの噴射口が<span class="g">２</span>機見える。</div>
<div style="left:53px;top:427px" class="ln j ">　搭乗する宇宙飛行士は、日本人の長瀬隼人。たった一人で、太陽系の外</div>
<div class="ul" style="left:53px;top:72px"></div>
<div class="rm" style="left:175.9px;top:64px"></div>
<div class="ul" style="left:53px;top:88px"></div>
<div class="rm" style="left:54.0px;top:80px"></div>
<div class="ul" style="left:53px;top:104px"></div>
<div class="rm" style="left:103.2px;top:96px"></div>
<div class="ul" style="left:53px;top:120px"></div>
<div class="ul" style="left:53px;top:136px"></div>
<div class="ul" style="left:53px;top:152px"></div>
<div class="ul" style="left:53px;top:168px"></div>
<div class="ul" style="left:53px;top:184px"></div>
<div class="ul" style="left:53px;top:200px"></div>
<div class="ul" style="left:53px;top:216px"></div>
<div class="rm" style="left:127.3px;top:208px"></div>
<div class="ul" style="left:53px;top:232px"></div>
<div class="ul" style="left:53px;top:248px"></div>
<div class="ul" style="left:53px;top:264px"></div>
<div class="ul" style="left:53px;top:280px"></div>
<div class="ul" style="left:53px;top:296px"></div>
<div class="ul" style="left:53px;top:312px"></div>
<div class="rm" style="left:247.7px;top:304px"></div>
<div class="ul" style="left:53px;top:328px"></div>
<div class="ul" style="left:53px;top:344px"></div>
<div class="ul" style="left:53px;top:360px"></div>
<div class="ul" style="left:53px;top:376px"></div>
<div class="ul" style="left:53px;top:392px"></div>
<div class="ul" style="left:53px;top:408px"></div>
<div class="rm" style="left:223.6px;top:400px"></div>
<div class="ul" style="left:53px;top:424px"></div>
<div class="rm" style="left:54.0px;top:416px"></div>
<div class="ul" style="left:53px;top:440px"></div>
</div>
<div class="a" style="left:570px;top:68px;width:1px;height:14px;background:#000"></div>
<div class="page" style="left:150px;top:530px;width:360px;height:300px;overflow:hidden">
<svg style="left:172.7px;top:38px" width="3" height="4" viewBox="0 0 3 4"><path d="M0.2 0l1.8 2-1.8 2z" fill="#ffa4b0"/></svg>
<div class="a" style="left:42.1px;top:34.6px;width:265px;text-align:left;font:7.4px/12px 'Liberation Serif',serif;color:#222">2</div>
<div style="left:42.5px;top:55px" class="ln j ">に出る初めての地球人となる彼は、すでにコクピットに座って、打ち上げ</div>
<div class="ln " style="left:42.5px;top:71px;letter-spacing:-0.206px">を待っている。ヘルメットのシールド越しの表情は、よく見えないが<span class="c">……</span>。</div>
<div style="left:42.5px;top:87px" class="ln j ">　ロケットと交信する管制室の中には、隼人の幼なじみで、このロケット</div>
<div style="left:42.5px;top:103px" class="ln j ">の設計者でもある、僕、笹岡時生がいる。そしてそのそばには、特別に入</div>
<div style="left:42.5px;top:119px" class="ln ">室が許可された、<span class="g">５</span>歳の少女、神田円香の姿がある<span class="c">……</span>。</div>
<div style="left:42.5px;top:135px" class="ln ">「打ち上げまで、あと少しだね」と、僕は話しかける。</div>
<div style="left:42.5px;top:151px" class="ln ">「隼人、大丈夫かな？」と、円香は応える。</div>
<div style="left:42.5px;top:167px" class="ln j ">「大丈夫さ。ロケットの設計も、軌道計算も、ぜんぶ僕がやったんだよ」</div>
<div style="left:42.5px;top:183px" class="ln ">と笑いかける。</div>
<div style="left:42.5px;top:199px" class="ln j ">「時生がそう言うんなら、間違いないね。あのときも、時生の言ったとお</div>
<div class="ul" style="left:42.5px;top:68px"></div>
<div class="ul" style="left:42.5px;top:84px"></div>
<div class="rm" style="left:309.5px;top:76px"></div>
<div class="ul" style="left:42.5px;top:100px"></div>
<div class="ul" style="left:42.5px;top:116px"></div>
<div class="ul" style="left:42.5px;top:132px"></div>
<div class="rm" style="left:253.3px;top:124px"></div>
<div class="ul" style="left:42.5px;top:148px"></div>
<div class="rm" style="left:245.2px;top:140px"></div>
<div class="ul" style="left:42.5px;top:164px"></div>
<div class="rm" style="left:205.1px;top:156px"></div>
<div class="ul" style="left:42.5px;top:180px"></div>
<div class="ul" style="left:42.5px;top:196px"></div>
<div class="rm" style="left:100.7px;top:188px"></div>
<div class="ul" style="left:42.5px;top:212px"></div>
</div>
<div class="page" style="left:517px;top:530px;width:360px;height:300px;overflow:hidden">
<svg style="left:183.2px;top:38px" width="3" height="4" viewBox="0 0 3 4"><path d="M0.2 0l1.8 2-1.8 2z" fill="#ffa4b0"/></svg>
<div class="a" style="left:53.3px;top:34.6px;width:265px;text-align:right;font:7.4px/12px 'Liberation Serif',serif;color:#222">3</div>
<div style="left:53px;top:55px" class="ln ">だって」</div>
<div style="left:53px;top:71px" class="ln ">　学校に着くなり、隼人が話しかけてきた。</div>
<div style="left:53px;top:87px" class="ln ">「ウワサは知ってるけど、<span class="em">あいつの話だ</span>。きっとデマだと思うよ」</div>
<div style="left:53px;top:103px" class="ln ">「でも、時生は、宇宙とか<span class="g">ＵＦＯ</span>とか好きだよな」</div>
<div style="left:53px;top:119px" class="ln j ">「好きは好きだけど、エイリアンクラフト（<span class="g">＝</span>宇宙人の乗り物）としての</div>
<div style="left:53px;top:135px" class="ln "><span class="g">ＵＦＯ</span>は、現実にはないと思ってるんだ」</div>
<div style="left:53px;top:151px" class="ln j ">「なんだか面倒くさいな。時生の言っていること。でもオレは、時生と山</div>
<div style="left:53px;top:167px" class="ln j ">に行ってみたいんだ。きっと、オレなんかには理解できないような、何か</div>
<div style="left:53px;top:183px" class="ln ">すごい発見をしてくれそうな気がするんだ」</div>
<div style="left:53px;top:199px" class="ln ">「たしかに気にはなるけどね<span class="c">……</span>」</div>
<div class="ul" style="left:53px;top:68px"></div>
<div class="rm" style="left:87.1px;top:60px"></div>
<div class="ul" style="left:53px;top:84px"></div>
<div class="rm" style="left:215.6px;top:76px"></div>
<div class="ul" style="left:53px;top:100px"></div>
<div class="rm" style="left:295.9px;top:92px"></div>
<div class="ul" style="left:53px;top:116px"></div>
<div class="rm" style="left:239.7px;top:108px"></div>
<div class="ul" style="left:53px;top:132px"></div>
<div class="ul" style="left:53px;top:148px"></div>
<div class="rm" style="left:207.6px;top:140px"></div>
<div class="ul" style="left:53px;top:164px"></div>
<div class="ul" style="left:53px;top:180px"></div>
<div class="ul" style="left:53px;top:196px"></div>
<div class="rm" style="left:215.6px;top:188px"></div>
<div class="ul" style="left:53px;top:212px"></div>
<div class="rm" style="left:183.5px;top:204px"></div>
</div>
</div>
<div class="a" style="left:1317px;top:78px;width:17px;height:774px;background:#f0f0f0"></div>
<div class="a" style="left:1318px;top:95px;width:15px;height:53px;background:#cdcdcd"></div>
<svg style="left:1321px;top:83px" width="10" height="8" viewBox="0 0 10 8"><path d="M1.4 6.6l3.4-3.7 3.4 3.7" fill="none" stroke="#555" stroke-width="1.9"/></svg>
<svg style="left:1321px;top:804px" width="10" height="8" viewBox="0 0 10 8"><path d="M1.4 1.4l3.4 3.7 3.4-3.7" fill="none" stroke="#555" stroke-width="1.9"/></svg>
<div class="a" style="left:1318px;top:816px;width:16px;height:32px;background:#f3f3f3;border-top:1px solid #dcdcdc"></div>
<div class="a" style="left:1318px;top:832px;width:16px;height:1px;background:#dcdcdc"></div>
<svg style="left:1322px;top:818px" width="9" height="30" viewBox="0 0 9 30" fill="#444">
<path d="M4.4 1l3.6 3.8h-7.2z"/><path d="M4.4 6.4l3.6 3.8h-7.2z"/>
<path d="M4.4 21.6l3.6-3.8h-7.2z" fill="#666"/><path d="M4.4 26.8l3.6-3.8h-7.2z"/></svg>
<div class="a" style="left:1317px;top:848px;width:17px;height:4px;background:#d0d0d0"></div>
<div class="a" style="left:1334px;top:50px;width:23px;height:819px;background:linear-gradient(90deg,#f6f6f6,#ededed 40%,#e6e6e6);border-left:1px solid #a6a6a6"></div>
<svg style="left:1342px;top:61px" width="8" height="8" viewBox="0 0 8 8"><path d="M7 0.8v6.4l-6.2-3.2z" fill="#8c8c8c"/></svg>
<div class="a" style="left:1338px;top:79px;width:16px;height:1px;background:#cfcfcf"></div>
<svg style="left:1338px;top:89px" width="17" height="17" viewBox="0 0 17 17">
<defs><linearGradient id="fg" x1="0" y1="0" x2="0" y2="1"><stop offset="0" stop-color="#3c4d88"/><stop offset="0.45" stop-color="#2c3a6c"/><stop offset="0.72" stop-color="#222b52"/><stop offset="0.78" stop-color="#141826"/><stop offset="1" stop-color="#0f121c"/></linearGradient></defs>
<rect x="0" y="0" width="17" height="16.6" rx="2" fill="url(#fg)"/>
<g fill="#fff" transform="translate(8.5 8.3)">
<path d="M0 -0.9C-1.1 -2.4 -2.1 -4 -2 -5.2C-1.900 -6.500 -1 -7 0 -7C1 -7 1.900 -6.500 2 -5.200C2.100 -4 1.100 -2.400 0 -0.900z" transform="rotate(30)"/><path d="M0 -0.9C-1.1 -2.4 -2.1 -4 -2 -5.2C-1.900 -6.500 -1 -7 0 -7C1 -7 1.900 -6.500 2 -5.200C2.100 -4 1.100 -2.400 0 -0.900z" transform="rotate(90)"/><path d="M0 -0.9C-1.1 -2.4 -2.1 -4 -2 -5.2C-1.900 -6.500 -1 -7 0 -7C1 -7 1.900 -6.500 2 -5.200C2.100 -4 1.100 -2.400 0 -0.900z" transform="rotate(150)"/><path d="M0 -0.9C-1.1 -2.4 -2.1 -4 -2 -5.2C-1.900 -6.500 -1 -7 0 -7C1 -7 1.900 -6.500 2 -5.200C2.100 -4 1.100 -2.400 0 -0.900z" transform="rotate(210)"/><path d="M0 -0.9C-1.1 -2.4 -2.1 -4 -2 -5.2C-1.900 -6.500 -1 -7 0 -7C1 -7 1.900 -6.500 2 -5.200C2.100 -4 1.100 -2.400 0 -0.900z" transform="rotate(270)"/><path d="M0 -0.9C-1.1 -2.4 -2.1 -4 -2 -5.2C-1.900 -6.500 -1 -7 0 -7C1 -7 1.900 -6.500 2 -5.200C2.100 -4 1.100 -2.400 0 -0.900z" transform="rotate(330)"/>
</g></svg>
<svg style="left:1338px;top:120px" width="18" height="17" viewBox="0 0 18 17">
<rect x="5" y="1.3" width="6.200" height="3" rx="1" fill="#fff" stroke="#232a4c" stroke-width="1.100"/>
<rect x="0.700" y="3.700" width="14.600" height="11.800" rx="2" fill="#fff" stroke="#232a4c" stroke-width="1.300"/>
<rect x="2.300" y="6.200" width="11.300" height="6.600" fill="#151a30"/>
<rect x="15.600" y="7" width="1.700" height="4" fill="#3a4b86"/>
<text x="2.900" y="12" font-family="Liberation Sans,sans-serif" font-weight="700" font-size="6.800" fill="#fff" textLength="10.200" lengthAdjust="spacingAndGlyphs">112</text>
</svg>
<span class="t" style="left:1337.6px;top:150.4px;font-family:'Liberation Serif','Noto Serif CJK SC',serif;font-size:18.5px;font-weight:600;color:#2a3152">あ</span>
<span class="t" style="left:1339.2px;top:179.3px;font-family:'Liberation Serif',serif;font-style:italic;font-size:19px;color:#2a3566;transform:scaleX(1.05)">A</span>
<div class="a" style="left:1340px;top:196.2px;width:13px;height:1.8px;background:#111"></div>
<span class="t" style="left:1337.8px;top:211.6px;font-family:'Liberation Serif',serif;font-size:12.5px;color:#1c1c2a;font-weight:400;-webkit-text-stroke:.35px #1c1c2a;letter-spacing:-2.6px;transform:scaleX(.88)">A<span style="font-size:17.5px;letter-spacing:0">A</span></span>
<svg style="left:1334px;top:240px" width="24" height="24" viewBox="0 0 24 24" fill="none">
<path d="M8.600 9.300h-4v9h10.700v-2.600" stroke="#15192c" stroke-width="1.300"/>
<path d="M10.400 10.200l-2.600 6.400 5.400-3z" fill="#26305c"/>
<rect x="10.400" y="6" width="10.500" height="8" rx="1.300" fill="#2b3868"/>
<rect x="12.300" y="7.900" width="6.700" height="4.200" fill="#1d2548" stroke="#fff" stroke-width="0.700"/>
<g fill="#fff"><circle cx="12.300" cy="7.900" r="1.150"/><circle cx="19" cy="7.900" r="1.150"/><circle cx="12.300" cy="12.100" r="1.150"/><circle cx="19" cy="12.100" r="1.150"/></g>
</svg>
<svg style="left:1334px;top:270px" width="24" height="24" viewBox="0 0 24 24" fill="none">
<path d="M15.400 8h2.100v11h-9.600" stroke="#111" stroke-width="1.200"/>
<path d="M17.700 10.200h2v11.300h-9.600" stroke="#000" stroke-width="1.200"/>
<rect x="5.600" y="5.500" width="9.300" height="11.400" fill="#fff" stroke="#27315e" stroke-width="1.300"/>
<path d="M7.400 8h5.800" stroke="#27315e" stroke-width="1.700"/>
<path d="M7.400 10.400h2.600M7.400 12.400h5.800M7.400 14.400h5.800" stroke="#111" stroke-width="1.100"/>
</svg>
<svg style="left:1339px;top:306px" width="16" height="17" viewBox="0 0 16 17">
<rect x="1" y="1.6" width="13.6" height="1.9" fill="#2a3562"/>
<rect x="1" y="6" width="1.2" height="1.8" fill="#2a3562"/><rect x="3.4" y="6" width="6.6" height="1.8" fill="#1a1f38"/>
<rect x="3" y="10" width="1.2" height="1.8" fill="#2a3562"/><rect x="5.4" y="10" width="6.6" height="1.8" fill="#111"/>
<rect x="5" y="14" width="1.2" height="1.8" fill="#2a3562"/><rect x="7.4" y="14" width="7.2" height="1.8" fill="#000"/>
</svg>
<svg style="left:1334px;top:333.200px" width="24" height="24" viewBox="0 0 24 24" fill="none">
<path d="M8.600 9.300h-4v9h10.700v-2.600" stroke="#15192c" stroke-width="1.300"/>
<path d="M10.400 10.200l-2.600 6.400 5.400-3z" fill="#26305c"/>
<rect x="10.400" y="6" width="10.500" height="8.100" rx="1.500" fill="#2b3868"/>
<text x="12.300" y="12.900" font-family="Liberation Sans,sans-serif" font-weight="700" font-size="7.600" fill="#fff">1</text>
<rect x="16.600" y="10.300" width="3" height="1.500" fill="#fff"/>
</svg>
<svg style="left:1338px;top:369.6px" width="17" height="13" viewBox="0 0 17 13">
<rect x="0" y="0" width="17" height="4.4" fill="#3a4b86"/><rect x="0" y="4.4" width="17" height="4.3" fill="#fff"/><rect x="0" y="8.7" width="17" height="4.3" fill="#16181f"/>
<rect x="5.8" y="0.9" width="5.4" height="3.5" fill="#fff"/><rect x="5.8" y="4.4" width="5.4" height="4.3" fill="#2a3562"/><rect x="5.8" y="8.7" width="5.4" height="3.4" fill="#fff"/>
<rect x="0" y="0" width="17" height="1" fill="#2f3c72"/><rect x="0" y="12" width="17" height="1" fill="#111"/>
</svg>
<svg style="left:1337.8px;top:401.4px" width="16" height="14" viewBox="0 0 16 14">
<path d="M0.6 7.4l2.6-2 3.2 3.6c2.2-3.2 5-6 8.6-8.4l0.5 0.6c-3.4 3.2-6 7-8 11.8l-1.6 0.4c-1.4-2.4-3-4.2-5.3-6z" fill="#1c2244"/></svg>
<div class="a" style="left:257px;top:852px;width:1060px;height:17px;background:linear-gradient(#f6f6f6,#f0f0f0)"></div>
<div class="a" style="left:273.5px;top:853px;width:1px;height:16px;background:#dadada"></div>
<div class="a" style="left:289px;top:853px;width:1px;height:16px;background:#dadada"></div>
<svg style="left:263px;top:857px" width="24" height="8" viewBox="0 0 24 8" fill="#8a8a8a"><path d="M4.4 0.4v6.6l-4-3.3z"/><path d="M17.6 0.4v6.6l4-3.3z"/></svg>
<div class="a" style="left:290px;top:852px;width:62px;height:17px;background:#fff"></div>
<svg style="left:296px;top:857px" width="7" height="8" viewBox="0 0 7 8"><path d="M0.5 0.5h3.6l2 2v4.6h-5.6z" fill="#fff" stroke="#7f93c8" stroke-width="0.9"/><path d="M4 0.6v2.1h2" fill="none" stroke="#7f93c8" stroke-width="0.8"/></svg>
<span class="t " style="left:305.6px;top:850.6px;font-size:12.6px;font-weight:700;color:#111;font-family:'Liberation Sans','Noto Sans CJK JP',sans-serif;transform:scaleX(0.978);">Sheet1</span>
<div class="a" style="left:352px;top:853px;width:1px;height:16px;background:#d4d4d4"></div>
<span class="t " style="left:358.8px;top:850.6px;font-size:12.4px;font-weight:400;color:#222;font-family:'Liberation Sans','Noto Sans CJK JP',sans-serif;transform:scaleX(0.876);">Sheet2</span>
<div class="a" style="left:405px;top:853px;width:1px;height:16px;background:#d4d4d4"></div>
<svg style="left:413px;top:856.5px" width="9" height="9" viewBox="0 0 9 9"><path d="M3.2 0h2.6v3.2h3.2v2.6h-3.2v3.2h-2.6v-3.2h-3.2v-2.6h3.2z" fill="#111"/></svg>
<div class="a" style="left:430px;top:853px;width:1px;height:16px;background:#d4d4d4"></div>
<div class="a" style="left:431px;top:852px;width:95px;height:17px;background:linear-gradient(#f7f7f7,#ececec)"></div>
<div class="a" style="left:526px;top:852px;width:4px;height:17px;background:#cfcfcf;border-left:1px solid #b8b8b8"></div>
<svg style="left:536px;top:855px" width="14" height="11" viewBox="0 0 14 11">
<rect x="0.5" y="0.5" width="13" height="10" fill="#fff" stroke="#6a6a6a" stroke-width="1"/>
<rect x="2" y="2" width="10" height="1.2" fill="#e0474c"/>
<rect x="2" y="4.4" width="4.4" height="1" fill="#4a76c0"/><rect x="2" y="6.4" width="4.4" height="1" fill="#4a76c0"/><rect x="2" y="8.2" width="4.4" height="1" fill="#4a76c0"/>
<rect x="7.6" y="4.2" width="4.4" height="5.2" fill="#45a0e6"/></svg>
<div class="a" style="left:556px;top:853px;width:1px;height:16px;background:#e2e2e2"></div>
<span class="t " style="left:577.8px;top:850.8px;font-size:12.3px;font-weight:400;color:#111;font-family:'Liberation Sans','Noto Sans CJK JP',sans-serif;transform:scaleX(0.763);">1頁</span>
<span class="t " style="left:615.4px;top:850.8px;font-size:12.3px;font-weight:400;color:#111;font-family:'Liberation Sans','Noto Sans CJK JP',sans-serif;transform:scaleX(0.831);">1行</span>
<span class="t " style="left:653.7px;top:850.8px;font-size:12.3px;font-weight:400;color:#111;font-family:'Liberation Sans','Noto Sans CJK JP',sans-serif;transform:scaleX(0.825);">1字</span>
<div class="a" style="left:675px;top:853px;width:1px;height:16px;background:#e2e2e2"></div>
<span class="t " style="left:712.6px;top:850.6px;font-size:12px;font-weight:400;color:#111;font-family:'Liberation Sans','Noto Sans CJK JP',sans-serif;transform:scaleX(0.732);">73%</span>
<svg style="left:733.6px;top:858.6px" width="6" height="4" viewBox="0 0 6 4"><path d="M0.2 0.3h5.4l-2.7 3.4z" fill="#666"/></svg>
<div class="a" style="left:753px;top:855px;width:12px;height:10px;background:linear-gradient(#3a3a3a,#000);border:1px solid #000"></div>
<div class="a" style="left:755.5px;top:858.4px;width:7px;height:3px;background:#fff"></div>
<div class="a" style="left:887px;top:855px;width:12px;height:10px;background:linear-gradient(#3a3a3a,#000);border:1px solid #000"></div>
<svg style="left:889.5px;top:856.4px" width="7" height="7" viewBox="0 0 7 7"><path d="M2.3 0h2.4v2.3h2.3v2.4h-2.3v2.3h-2.4v-2.3h-2.3v-2.4h2.3z" fill="#fff"/></svg>
<div class="a" style="left:776px;top:859px;width:100px;height:2px;background:#cfcfcf;border-bottom:1px solid #e6e6e6"></div>
<div class="a" style="left:825px;top:857px;width:1px;height:7px;background:#9a9a9a"></div>
<svg style="left:794.5px;top:853.6px" width="9" height="14" viewBox="0 0 9 14"><path d="M1.6 0.5h5.8a1 1 0 0 1 1 1v8l-3.9 3.8-3.9-3.8v-8a1 1 0 0 1 1-1z" fill="#f2f2f2" stroke="#7a7a7a" stroke-width="1"/><rect x="3.2" y="1.8" width="2.6" height="8.6" fill="#d6d6d6"/></svg>
<div class="a" style="left:906px;top:852px;width:408px;height:17px;background:#f0f0f0"></div>
<svg style="left:910px;top:856.6px" width="8" height="9" viewBox="0 0 8 9"><path d="M6 0.6l-4.2 3.6 4.2 3.6" fill="none" stroke="#bdbdbd" stroke-width="2"/></svg>
<svg style="left:1302px;top:856.6px" width="8" height="9" viewBox="0 0 8 9"><path d="M1.8 0.6l4.2 3.6-4.2 3.6" fill="none" stroke="#bdbdbd" stroke-width="2"/></svg>
<div class="a" style="left:1314px;top:852px;width:4px;height:17px;background:#cfcfcf"></div>
<div class="a" style="left:1318px;top:852px;width:16px;height:17px;background:#f4f4f4"></div>
<div class="a" style="left:1px;top:869px;width:1356px;height:24px;background:linear-gradient(#f0f0f0,#e9e9e9 30%,#dddddd 78%,#d5d5d5)"></div>
<div class="a" style="left:1px;top:869px;width:1356px;height:1px;background:#b0b0b0"></div>
<div class="a" style="left:55px;top:874px;width:13px;height:16px;background:linear-gradient(#f4f4f4,#dedede);border:1px solid #8a8a8a;border-radius:1px"></div>
<span class="t " style="left:58.2px;top:872.4px;font-size:13px;font-weight:400;color:#333;font-family:'Liberation Sans','Noto Sans CJK JP',sans-serif;transform:scaleX(0.805);">F</span>
<span class="t " style="left:93.4px;top:873.4px;font-size:13.2px;font-weight:400;color:#4166e8;font-family:'Liberation Sans','Noto Sans CJK JP',sans-serif;transform:scaleX(0.949);">21,260 文字</span>
<div class="a" style="left:178px;top:875px;width:1px;height:14px;background:#555"></div>
<span class="t " style="left:196.6px;top:873.4px;font-size:13.2px;font-weight:400;color:#4166e8;font-family:'Liberation Sans','Noto Sans CJK JP',sans-serif;transform:scaleX(0.941);">游明朝,太字  12.0ﾎﾟｲﾝﾄ</span>
<svg style="left:1343px;top:880px" width="13" height="13" viewBox="0 0 13 13" stroke-width="1.1"><path d="M12.500 1.500l-11 11M12.500 5l-7.500 7.500M12.500 8.500l-4 4" stroke="#b4b4b4"/><path d="M12.500 2.700l-9.800 9.800M12.500 6.200l-6.300 6.300M12.500 9.700l-2.800 2.800" stroke="#f4f4f4"/></svg>
<div class="a" style="left:0;top:0;width:1358px;height:894px;border:1px solid #5c5c5c;pointer-events:none"></div>
</div>
</body>
</html>
